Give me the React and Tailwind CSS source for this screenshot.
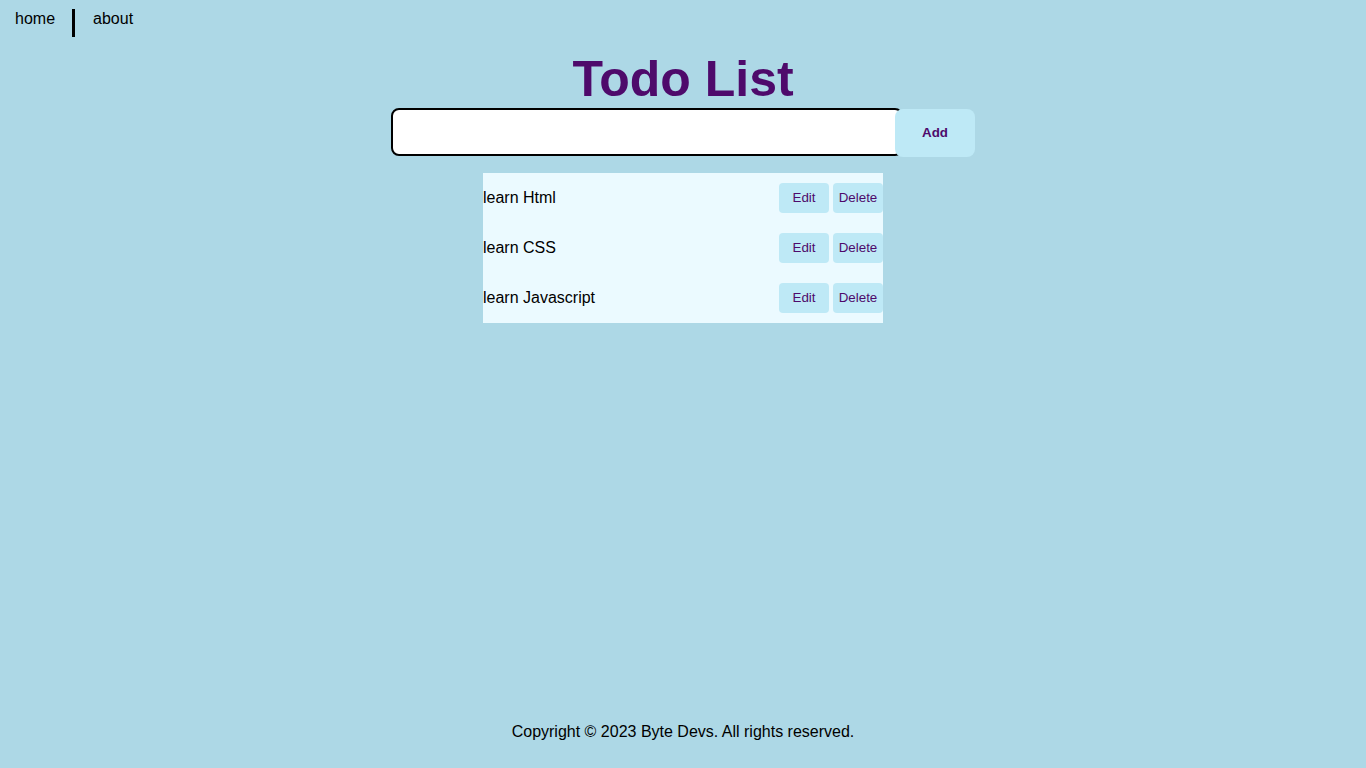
const todos = ['learn Html', 'learn CSS', 'learn Javascript']

export default function App() {
  return (
    <div className="min-h-[768px] bg-[#add8e6] flex flex-col text-black" style={{ fontFamily: '"Liberation Sans", Arial, sans-serif' }}>
      <nav className="flex items-center h-[37px] pl-[15px]">
        <a className="text-base">home</a>
        <span className="ml-[17px] mr-[18px] w-[3px] h-[28px] bg-black mt-[8px]" />
        <a className="text-base">about</a>
      </nav>

      <main className="flex flex-col items-center">
        <h1 className="pt-[14px] text-[50px] leading-[57px] font-bold text-[#4e0a6b]">
          Todo List
        </h1>
        <div className="flex items-start">
          <input className="w-[512px] h-[48px] bg-white border-2 border-black rounded-[8px] outline-none" />
          <button className="-ml-[8px] mt-[1px] relative w-[80px] h-[48px] bg-[#bee9f6] rounded-[8px] text-[13.33px] font-bold text-[#4e0a6b]">
            Add
          </button>
        </div>

        <ul className="w-[400px] mt-[16px] bg-[#ebfaff]">
          {todos.map(t => (
            <li key={t} className="flex items-center justify-between h-[50px]">
              <span className="text-base">{t}</span>
              <div className="flex gap-[4px]">
                <button className="w-[50px] h-[30px] rounded-[4px] bg-[#bee9f6] text-[13.33px] text-[#4e0a6b]">Edit</button>
                <button className="w-[50px] h-[30px] rounded-[4px] bg-[#bee9f6] text-[13.33px] text-[#4e0a6b]">Delete</button>
              </div>
            </li>
          ))}
        </ul>
      </main>

      <footer className="mt-auto pb-[24px] text-center text-base">
        Copyright © 2023 Byte Devs. All rights reserved.
      </footer>
    </div>
  )
}
